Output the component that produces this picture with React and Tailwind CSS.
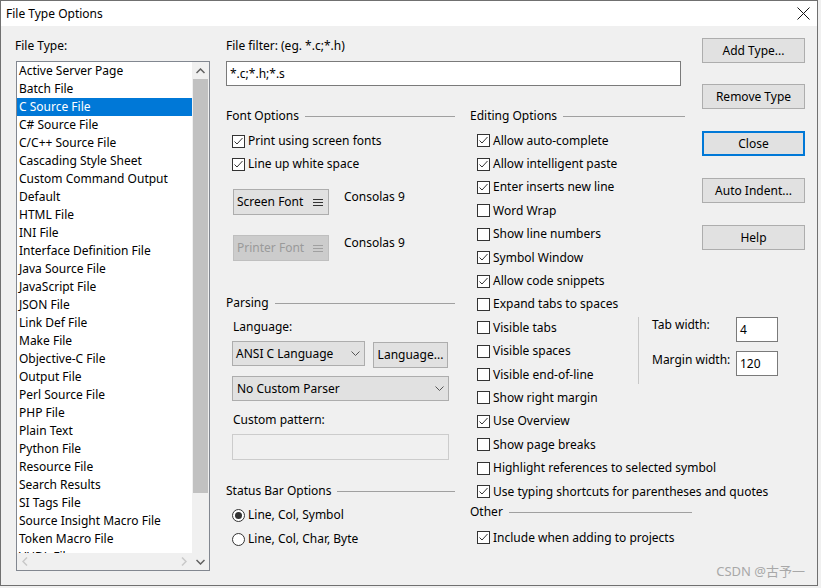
import React from 'react';

const fileTypes = [
  'Active Server Page', 'Batch File', 'C Source File', 'C# Source File', 'C/C++ Source File',
  'Cascading Style Sheet', 'Custom Command Output', 'Default', 'HTML File', 'INI File',
  'Interface Definition File', 'Java Source File', 'JavaScript File', 'JSON File', 'Link Def File',
  'Make File', 'Objective-C File', 'Output File', 'Perl Source File', 'PHP File', 'Plain Text',
  'Python File', 'Resource File', 'Search Results', 'SI Tags File', 'Source Insight Macro File',
  'Token Macro File', 'VHDL File',
];

const Check = ({ checked, label }) => (
  <div className="flex items-center h-[16px]">
    <span className="w-[13px] h-[13px] border border-[#333333] bg-white flex items-center justify-center shrink-0">
      {checked && (
        <svg width="11" height="11" viewBox="0 0 11 11">
          <path d="M1.5 5.5 L4 8 L9.5 2" fill="none" stroke="#333333" strokeWidth="1" />
        </svg>
      )}
    </span>
    <span className="ml-[3px] whitespace-nowrap">{label}</span>
  </div>
);

const Radio = ({ checked, label }) => (
  <div className="flex items-center h-[16px]">
    <span className="w-[13px] h-[13px] rounded-full border border-[#333333] bg-white flex items-center justify-center shrink-0">
      {checked && <span className="w-[7px] h-[7px] rounded-full bg-[#333333]" />}
    </span>
    <span className="ml-[3px] whitespace-nowrap">{label}</span>
  </div>
);

const Group = ({ title, className = '' }) => (
  <div className={`flex items-center h-[16px] ${className}`}>
    <span className="whitespace-nowrap">{title}</span>
    <span className="flex-1 h-px bg-[#a0a0a0] ml-[6px]" />
  </div>
);

const Chevron = () => (
  <svg width="9" height="5" viewBox="0 0 9 5">
    <path d="M0.5 0.5 L4.5 4.5 L8.5 0.5" fill="none" stroke="#555555" strokeWidth="1" />
  </svg>
);

const Menu = ({ color }) => (
  <svg width="10" height="9" viewBox="0 0 10 9">
    <path d="M0 1.5 H10 M0 4.5 H10 M0 7.5 H10" stroke={color} strokeWidth="1" />
  </svg>
);

const SideBtn = ({ label, active, className = '' }) => (
  <div
    className={`w-[103px] h-[25px] bg-[#e1e1e1] flex items-center justify-center ${
      active ? 'border-2 border-[#0078d7]' : 'border border-[#adadad]'
    } ${className}`}
  >
    {label}
  </div>
);

const Row = ({ children }) => <div className="h-[23.4px] flex items-center">{children}</div>;

export default function App() {
  return (
    <div className="w-[821px] h-[588px] bg-[#f0f0f0] text-[12px] leading-[16px] text-black font-['Noto_Sans',sans-serif] relative">
      <div className="w-[818px] h-[586px] border border-[#707070] flex flex-col">
        {/* title bar */}
        <div className="h-[25px] bg-white flex items-center justify-between pl-[5px] pr-[7px]">
          <span className="text-[12px]">File Type Options</span>
          <svg width="13" height="13" viewBox="0 0 13 13">
            <path d="M0.5 0.5 L12.5 12.5 M12.5 0.5 L0.5 12.5" stroke="#111111" strokeWidth="1" />
          </svg>
        </div>

        <div className="flex-1 flex items-start">
          {/* file type list */}
          <div className="ml-[14px] w-[196px] shrink-0 pt-[12px]">
            <div>File Type:</div>
            <div className="ml-[1px] mt-[7px] w-[194px] h-[510px] border border-[#828790] bg-white flex">
              <div className="w-[175px] flex flex-col">
                <div className="flex-1 overflow-hidden">
                  {fileTypes.map((t, i) => (
                    <div
                      key={t}
                      className={`h-[18px] flex items-center pl-[2px] whitespace-nowrap ${
                        i === 2 ? 'bg-[#0078d7] text-white' : ''
                      }`}
                    >
                      {t}
                    </div>
                  ))}
                </div>
                <div className="h-[17px] bg-[#f0f0f0] flex items-center justify-between px-[5px]">
                  <svg width="6" height="9" viewBox="0 0 6 9">
                    <path d="M5 0.5 L1 4.5 L5 8.5" fill="none" stroke="#c8c8c8" strokeWidth="1.5" />
                  </svg>
                  <svg width="6" height="9" viewBox="0 0 6 9">
                    <path d="M1 0.5 L5 4.5 L1 8.5" fill="none" stroke="#c8c8c8" strokeWidth="1.5" />
                  </svg>
                </div>
              </div>
              <div className="w-[17px] bg-[#f0f0f0] flex flex-col">
                <div className="h-[17px] flex items-center justify-center">
                  <svg width="9" height="6" viewBox="0 0 9 6">
                    <path d="M0.5 5 L4.5 1 L8.5 5" fill="none" stroke="#606060" strokeWidth="1.5" />
                  </svg>
                </div>
                <div className="h-[414px] mx-[1px] bg-[#c1c1c1]" />
                <div className="flex-1" />
                <div className="h-[17px] flex items-center justify-center">
                  <svg width="9" height="6" viewBox="0 0 9 6">
                    <path d="M0.5 1 L4.5 5 L8.5 1" fill="none" stroke="#606060" strokeWidth="1.5" />
                  </svg>
                </div>
              </div>
            </div>
          </div>

          {/* middle */}
          <div className="ml-[15px] w-[466px] shrink-0 pt-[12px]">
            <div>File filter: (eg. *.c;*.h)</div>
            <div className="mt-[7px] w-[455px] h-[25px] border border-[#7a7a7a] bg-white flex items-center pl-[3px]">
              *.c;*.h;*.s
            </div>

            <div className="flex mt-[22px]">
              {/* left sub column */}
              <div className="w-[229px] shrink-0">
                <Group title="Font Options" />
                <div className="ml-[6px] mt-[9px] flex flex-col gap-[7px]">
                  <Check checked label="Print using screen fonts" />
                  <Check checked label="Line up white space" />
                </div>

                <div className="flex items-start mt-[17px] ml-[7px]">
                  <div className="w-[96px] h-[26px] shrink-0 bg-[#e1e1e1] border border-[#adadad] flex items-center justify-between pl-[3px] pr-[5px]">
                    <span>Screen Font</span>
                    <Menu color="#333333" />
                  </div>
                  <span className="ml-[15px]">Consolas 9</span>
                </div>
                <div className="flex items-start mt-[20px] ml-[7px]">
                  <div className="w-[96px] h-[26px] shrink-0 bg-[#cccccc] border border-[#bfbfbf] text-[#9a9a9a] flex items-center justify-between pl-[3px] pr-[5px]">
                    <span>Printer Font</span>
                    <Menu color="#a0a0a0" />
                  </div>
                  <span className="ml-[15px]">Consolas 9</span>
                </div>

                <Group title="Parsing" className="mt-[34px]" />
                <div className="ml-[7px] mt-[8px]">Language:</div>
                <div className="flex items-start ml-[6px] mt-[6px]">
                  <div className="w-[133px] h-[25px] shrink-0 bg-[#e1e1e1] border border-[#adadad] flex items-center justify-between pl-[3px] pr-[4px]">
                    <span>ANSI C Language</span>
                    <Chevron />
                  </div>
                  <div className="ml-[8px] mt-[1px] w-[75px] h-[26px] shrink-0 bg-[#e1e1e1] border border-[#adadad] flex items-center justify-center">
                    Language...
                  </div>
                </div>
                <div className="ml-[6px] mt-[8px] w-[217px] h-[25px] bg-[#e1e1e1] border border-[#adadad] flex items-center justify-between pl-[4px] pr-[4px]">
                  <span>No Custom Parser</span>
                  <Chevron />
                </div>
                <div className="ml-[7px] mt-[11px]">Custom pattern:</div>
                <div className="ml-[6px] mt-[6px] w-[217px] h-[26px] bg-[#f0f0f0] border border-[#cccccc]" />

                <Group title="Status Bar Options" className="mt-[23px]" />
                <div className="ml-[6px] mt-[8px] flex flex-col gap-[8px]">
                  <Radio checked label="Line, Col, Symbol" />
                  <Radio label="Line, Col, Char, Byte" />
                </div>
              </div>

              {/* right sub column */}
              <div className="ml-[15px] w-[222px] shrink-0">
                <Group title="Editing Options" className="w-[215px]" />
                <div className="ml-[7px] mt-[5px]">
                  <Row><Check checked label="Allow auto-complete" /></Row>
                  <Row><Check checked label="Allow intelligent paste" /></Row>
                  <Row><Check checked label="Enter inserts new line" /></Row>
                  <Row><Check label="Word Wrap" /></Row>
                  <Row><Check label="Show line numbers" /></Row>
                  <Row><Check checked label="Symbol Window" /></Row>
                  <Row><Check checked label="Allow code snippets" /></Row>
                  <Row><Check label="Expand tabs to spaces" /></Row>
                  <div className="flex items-start">
                    <div className="w-[161px] shrink-0">
                      <Row><Check label="Visible tabs" /></Row>
                      <Row><Check label="Visible spaces" /></Row>
                      <Row><Check label="Visible end-of-line" /></Row>
                    </div>
                    <div className="w-px h-[67px] shrink-0 bg-[#c8c8c8] mt-[1px]" />
                    <div className="ml-[13px] mt-[1px] shrink-0 grid grid-cols-[84px_42px] gap-y-[9px] items-start">
                      <span>Tab width:</span>
                      <div className="h-[25px] border border-[#7a7a7a] bg-white flex items-center pl-[3px]">4</div>
                      <span className="mt-[1px]">Margin width:</span>
                      <div className="h-[25px] border border-[#7a7a7a] bg-white flex items-center pl-[3px]">120</div>
                    </div>
                  </div>
                  <Row><Check label="Show right margin" /></Row>
                  <Row><Check checked label="Use Overview" /></Row>
                  <Row><Check label="Show page breaks" /></Row>
                  <Row><Check label="Highlight references to selected symbol" /></Row>
                  <Row><Check checked label="Use typing shortcuts for parentheses and quotes" /></Row>
                </div>
                <Group title="Other" className="mt-[1px]" />
                <div className="ml-[7px] mt-[6px]">
                  <Row><Check checked label="Include when adding to projects" /></Row>
                </div>
              </div>
            </div>
          </div>

          {/* buttons */}
          <div className="ml-[10px] pt-[12px] shrink-0 flex flex-col">
            <SideBtn label="Add Type..." />
            <SideBtn label="Remove Type" className="mt-[21px]" />
            <SideBtn label="Close" active className="mt-[22px]" />
            <SideBtn label="Auto Indent..." className="mt-[22px]" />
            <SideBtn label="Help" className="mt-[22px]" />
          </div>
        </div>
      </div>

      <div className="absolute right-[16px] top-[563px] text-[13px] text-[#a8a8a8] font-['Noto_Sans','Noto_Sans_CJK_SC',sans-serif]">
        CSDN @古予一
      </div>
    </div>
  );
}
